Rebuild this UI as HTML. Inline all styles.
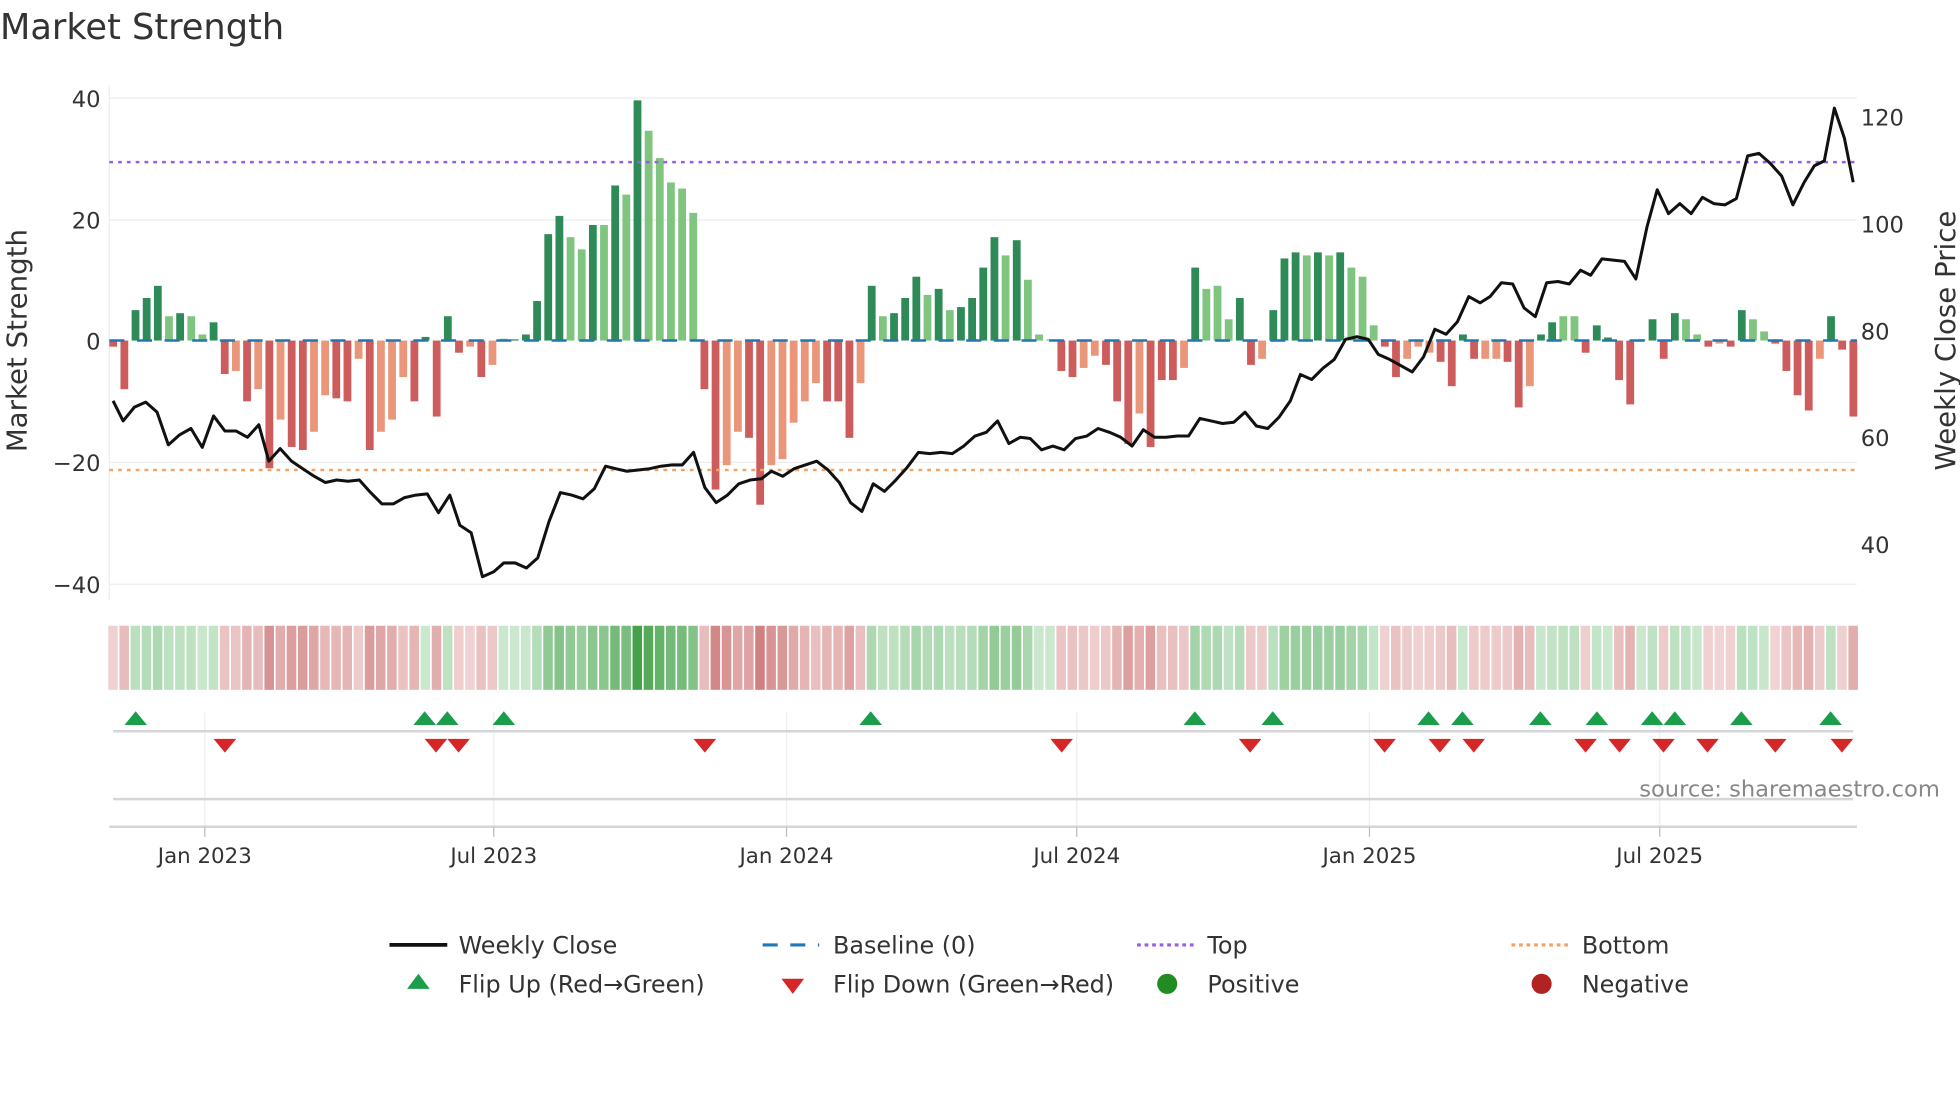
<!DOCTYPE html>
<html><head><meta charset="utf-8"><style>
html,body{margin:0;padding:0;background:#fff;}
svg{display:block;font-family:"DejaVu Sans","Liberation Sans",sans-serif;}
</style></head><body>
<svg id="s" width="1960" height="1102" viewBox="0 0 1560 877" xmlns="http://www.w3.org/2000/svg">
<rect width="1560" height="877" fill="#fff"/>
<text x="0" y="31" font-size="28" fill="#333">Market Strength</text>
<g stroke="#eceef0" stroke-width="1">
<line x1="87" y1="78" x2="1478" y2="78"/><line x1="87" y1="175" x2="1478" y2="175"/>
<line x1="87" y1="368" x2="1478" y2="368"/><line x1="87" y1="465" x2="1478" y2="465"/>
<line x1="87" y1="68" x2="87" y2="478"/>
</g>
<g font-size="18" fill="#333" text-anchor="end">
<text x="80" y="85">40</text><text x="80" y="182">20</text><text x="80" y="278">0</text>
<text x="80" y="375">−20</text><text x="80" y="472">−40</text>
</g>
<g font-size="18" fill="#333">
<text x="1481" y="100">120</text><text x="1481" y="185">100</text><text x="1481" y="270">80</text>
<text x="1481" y="355">60</text><text x="1481" y="440">40</text>
</g>
<text transform="translate(21,271) rotate(-90)" font-size="22" fill="#333" text-anchor="middle">Market Strength</text>
<text transform="translate(1556,271) rotate(-90)" font-size="22" fill="#333" text-anchor="middle">Weekly Close Price</text>
<g id="bars"></g>
<line x1="87" y1="271" x2="1478" y2="271" stroke="#1f77b4" stroke-width="2" stroke-dasharray="12,10"/>
<line x1="87" y1="129" x2="1478" y2="129" stroke="#9b5de5" stroke-width="2" stroke-dasharray="3,4"/>
<line x1="87" y1="374" x2="1478" y2="374" stroke="#f4a261" stroke-width="2" stroke-dasharray="3,4"/>
<polyline id="price" fill="none" stroke="#111" stroke-width="2.4" stroke-linejoin="round"/>
<g id="strip"></g>
<g stroke="#eceef0" stroke-width="1">
<line x1="163" y1="567" x2="163" y2="658"/><line x1="393" y1="567" x2="393" y2="658"/>
<line x1="626" y1="567" x2="626" y2="658"/><line x1="857" y1="567" x2="857" y2="658"/>
<line x1="1090" y1="567" x2="1090" y2="658"/><line x1="1321" y1="567" x2="1321" y2="658"/>
</g>
<line x1="90" y1="582" x2="1475" y2="582" stroke="#d4d6d8" stroke-width="2"/>
<line x1="90" y1="636" x2="1475" y2="636" stroke="#d4d6d8" stroke-width="2"/>
<line x1="87" y1="658" x2="1478" y2="658" stroke="#d4d6d8" stroke-width="2"/>
<g stroke="#bbb" stroke-width="1">
<line x1="163" y1="658" x2="163" y2="666"/><line x1="393" y1="658" x2="393" y2="666"/>
<line x1="626" y1="658" x2="626" y2="666"/><line x1="857" y1="658" x2="857" y2="666"/>
<line x1="1090" y1="658" x2="1090" y2="666"/><line x1="1321" y1="658" x2="1321" y2="666"/>
</g>
<g id="flips"></g>
<g font-size="17" fill="#333" text-anchor="middle">
<text x="163" y="687">Jan 2023</text><text x="393" y="687">Jul 2023</text><text x="626" y="687">Jan 2024</text>
<text x="857" y="687">Jul 2024</text><text x="1090" y="687">Jan 2025</text><text x="1321" y="687">Jul 2025</text>
</g>
<text x="1544" y="634" font-size="18" fill="#888" text-anchor="end">source: sharemaestro.com</text>
<g font-size="19" fill="#333">
<line x1="310" y1="752" x2="356" y2="752" stroke="#111" stroke-width="3"/>
<text x="365" y="759">Weekly Close</text>
<line x1="607" y1="752" x2="652" y2="752" stroke="#1f77b4" stroke-width="2.5" stroke-dasharray="12,10"/>
<text x="663" y="759">Baseline (0)</text>
<line x1="905" y1="752" x2="950" y2="752" stroke="#9b5de5" stroke-width="2.5" stroke-dasharray="3,3"/>
<text x="961" y="759">Top</text>
<line x1="1203" y1="752" x2="1248" y2="752" stroke="#f4a261" stroke-width="2.5" stroke-dasharray="3,3"/>
<text x="1259" y="759">Bottom</text>
<polygon points="324,787 333,775 342,787" fill="#1a9e4a"/>
<text x="365" y="790">Flip Up (Red→Green)</text>
<polygon points="622,779 640,779 631,791" fill="#d62728"/>
<text x="663" y="790">Flip Down (Green→Red)</text>
<circle cx="929" cy="783" r="8" fill="#228b22"/>
<text x="961" y="790">Positive</text>
<circle cx="1227" cy="783" r="8" fill="#b22222"/>
<text x="1259" y="790">Negative</text>
</g>
</svg>
<script>
var NS="http://www.w3.org/2000/svg";
function el(t,a,p){var e=document.createElementNS(NS,t);for(var k in a)e.setAttribute(k,a[k]);p.appendChild(e);return e;}
var B=[[-1,'r'],[-8,'r'],[5,'d'],[7,'d'],[9,'d'],[4,'l'],[4.5,'d'],[4,'l'],[1,'l'],[3,'d'],
[-5.5,'r'],[-5,'o'],[-10,'r'],[-8,'o'],[-21,'r'],[-13,'o'],[-17.5,'r'],[-18,'r'],[-15,'o'],[-9,'o'],
[-9.5,'r'],[-10,'r'],[-3,'o'],[-18,'r'],[-15,'o'],[-13,'o'],[-6,'o'],[-10,'r'],[0.6,'d'],[-12.5,'r'],
[4,'d'],[-2,'r'],[-1,'o'],[-6,'r'],[-4,'o'],[0.3,'l'],[0.2,'d'],[1,'d'],[6.5,'d'],[17.5,'d'],
[20.5,'d'],[17,'l'],[15,'l'],[19,'d'],[19,'l'],[25.5,'d'],[24,'l'],[39.5,'d'],[34.5,'l'],[30,'l'],
[26,'l'],[25,'l'],[21,'l'],[-8,'r'],[-24.5,'r'],[-20.5,'o'],[-15,'o'],[-16,'r'],[-27,'r'],[-20.5,'o'],
[-19.5,'o'],[-13.5,'o'],[-10,'o'],[-7,'o'],[-10,'r'],[-10,'r'],[-16,'r'],[-7,'o'],[9,'d'],[4,'l'],
[4.5,'d'],[7,'d'],[10.5,'d'],[7.5,'l'],[8.5,'d'],[5,'l'],[5.5,'d'],[7,'d'],[12,'d'],[17,'d'],
[14,'l'],[16.5,'d'],[10,'l'],[1,'l'],[0.2,'l'],[-5,'r'],[-6,'r'],[-4.5,'o'],[-2.5,'o'],[-4,'r'],
[-10,'r'],[-17,'r'],[-12,'o'],[-17.5,'r'],[-6.5,'r'],[-6.5,'r'],[-4.5,'o'],[12,'d'],[8.5,'l'],[9,'l'],
[3.5,'l'],[7,'d'],[-4,'r'],[-3,'o'],[5,'d'],[13.5,'d'],[14.5,'d'],[14,'l'],[14.5,'d'],[14,'l'],
[14.5,'d'],[12,'l'],[10.5,'l'],[2.5,'l'],[-1,'r'],[-6,'r'],[-3,'o'],[-1,'o'],[-2,'o'],[-3.5,'r'],
[-7.5,'r'],[1,'d'],[-3,'r'],[-3,'o'],[-3,'o'],[-3.5,'r'],[-11,'r'],[-7.5,'o'],[1,'d'],[3,'d'],
[4,'l'],[4,'l'],[-2,'r'],[2.5,'d'],[0.5,'d'],[-6.5,'r'],[-10.5,'r'],[0.2,'d'],[3.5,'d'],[-3,'r'],
[4.5,'d'],[3.5,'l'],[1,'l'],[-1,'r'],[-0.5,'o'],[-1,'r'],[5,'d'],[3.5,'l'],[1.5,'l'],[-0.5,'r'],
[-5,'r'],[-9,'r'],[-11.5,'r'],[-3,'o'],[4,'d'],[-1.5,'r'],[-12.5,'r']];
var C={d:'#2e8b57',l:'#7fc47f',r:'#cd5c5c',o:'#e9967a'};
var N=B.length,x0=90,x1=1475,sp=(x1-x0)/(N-1),gb=document.getElementById('bars'),gs=document.getElementById('strip');
function mix(a,b,t){return 'rgb('+a.map(function(v,k){return Math.round(v+(b[k]-v)*t)}).join(',')+')';}
for(var i=0;i<N;i++){var v=B[i][0],x=x0+i*sp,h=Math.abs(v)*4.84,y=v>0?271-h:271;
el('rect',{x:x-3,y:y,width:6.2,height:Math.max(h,0.8),fill:C[B[i][1]]},gb);
var col;
if(v>=0){col=mix([216,239,220],[67,160,71],0.08+0.92*Math.min(v/40,1));}
else{col=mix([245,222,222],[208,128,128],0.1+0.9*Math.min(-v/27,1));}
el('rect',{x:x-sp/2+0.6,y:498,width:sp-1.3,height:51,fill:col},gs);}
var P=[[90,319],[98,335],[107,324],[116,320],[125,328],[134,354],[143,346],[152,341],[161,356],[170,331],[179,343],[188,343],[197,348],[206,338],[214,367],[223,357],[232,367],[241,373],[250,379],[259,384],[268,382],[277,383],[286,382],[295,392],[304,401],[313,401],[322,396],[331,394],[340,393],[349,408],[358,394],[366,418],[375,424],[384,459],[393,455],[401,448],[410,448],[419,452],[428,444],[437,415],[446,392],[455,394],[464,397],[473,389],[482,371],[490,373],[499,375],[508,374],[517,373],[526,371],[535,370],[543,370],[552,360],[561,388],[570,400],[579,394],[588,385],[597,382],[606,381],[614,375],[623,379],[632,373],[641,370],[650,367],[659,374],[668,384],[677,400],[686,407],[695,385],[704,391],[713,382],[722,372],[731,360],[740,361],[749,360],[758,361],[767,355],[776,347],[785,344],[794,335],[803,353],[812,348],[820,349],[829,358],[838,355],[847,358],[856,349],[865,347],[874,341],[883,344],[892,348],[901,355],[910,342],[919,348],[928,348],[937,347],[946,347],[955,333],[964,335],[973,337],[982,336],[991,328],[1000,339],[1009,341],[1018,332],[1027,319],[1035,298],[1044,302],[1053,293],[1062,286],[1071,270],[1080,268],[1089,270],[1097,282],[1106,286],[1115,291],[1124,296],[1133,284],[1142,262],[1151,266],[1160,256],[1169,236],[1178,241],[1186,236],[1195,225],[1204,226],[1213,245],[1222,252],[1231,225],[1240,224],[1249,226],[1258,215],[1266,219],[1275,206],[1284,207],[1293,208],[1302,222],[1311,180],[1319,151],[1328,170],[1337,162],[1346,170],[1355,157],[1364,162],[1373,163],[1382,158],[1391,124],[1400,122],[1409,130],[1418,140],[1427,163],[1436,145],[1444,132],[1452,128],[1460,86],[1468,110],[1475,145]];
document.getElementById('price').setAttribute('points',P.map(function(p){return p.join(',')}).join(' '));
var gf=document.getElementById('flips');
[108,338,356,401,693,951,1013,1137,1164,1226,1271,1315,1333,1386,1457].forEach(function(x){el('polygon',{points:(x-9)+',577 '+x+',566 '+(x+9)+',577',fill:'#1a9e4a'},gf);});
[179,347,365,561,845,995,1102,1146,1173,1262,1289,1324,1359,1413,1466].forEach(function(x){el('polygon',{points:(x-9)+',588 '+(x+9)+',588 '+x+',599',fill:'#d62728'},gf);});
</script>
</body></html>
